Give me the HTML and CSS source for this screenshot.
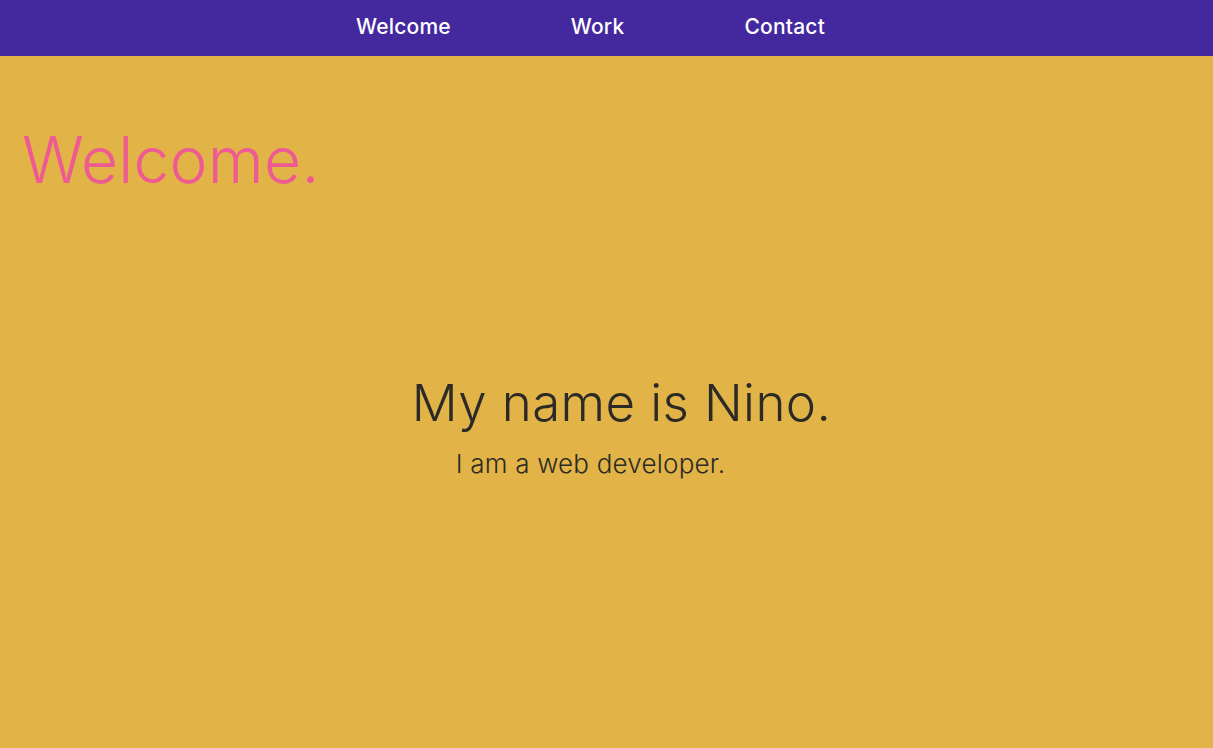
FILE: index.html
```html
<!DOCTYPE html>
<html lang="en">
<head>
<meta charset="utf-8">
<title>Nino</title>
<link rel="stylesheet" href="styles.css">
</head>
<body>
<nav class="nav">
  <ul class="nav-list">
    <li><a href="#welcome">Welcome</a></li>
    <li><a href="#work">Work</a></li>
    <li><a href="#contact">Contact</a></li>
  </ul>
</nav>
<section class="hero" id="welcome">
  <h1 class="hero-title">Welcome.</h1>
  <div class="intro">
    <h2 class="intro-name">My name is Nino.</h2>
    <p class="intro-role">I am a web developer.</p>
  </div>
</section>
</body>
</html>
```
FILE: styles.css
```css
* { box-sizing: border-box; }
html, body { margin: 0; padding: 0; }
body {
  font-family: Inter, "Noto Sans", sans-serif;
  background: #e2b447;
  height: 748px;
  overflow: hidden;
}
.nav {
  background: #44299e;
  height: 56px;
  display: flex;
  justify-content: center;
}
.nav-list {
  list-style: none;
  margin: 0;
  padding: 0 32px 4px 0;
  display: flex;
  align-items: center;
  gap: 120px;
}
.nav-list a {
  color: #fff;
  text-decoration: none;
  font-size: 21px;
  font-weight: 500;
  letter-spacing: 0.2px;
}
.hero {
  padding: 0 22px;
}
.hero-title {
  margin: 0;
  padding-top: 66px;
  font-size: 64px;
  font-weight: 300;
  color: #ee5a92;
  line-height: 1.2;
  letter-spacing: 0.3px;
}
.intro {
  margin-top: 173px;
  display: flex;
  flex-direction: column;
  align-items: center;
}
.intro-name {
  margin: 0;
  font-size: 51px;
  font-weight: 300;
  color: #2b2a26;
  line-height: 1.2;
  letter-spacing: 0.4px;
  padding-left: 30px;
}
.intro-role {
  margin: 15px 0 0;
  font-size: 26px;
  font-weight: 300;
  color: #2b2a26;
  letter-spacing: 0.2px;
  padding-right: 32px;
}
```
